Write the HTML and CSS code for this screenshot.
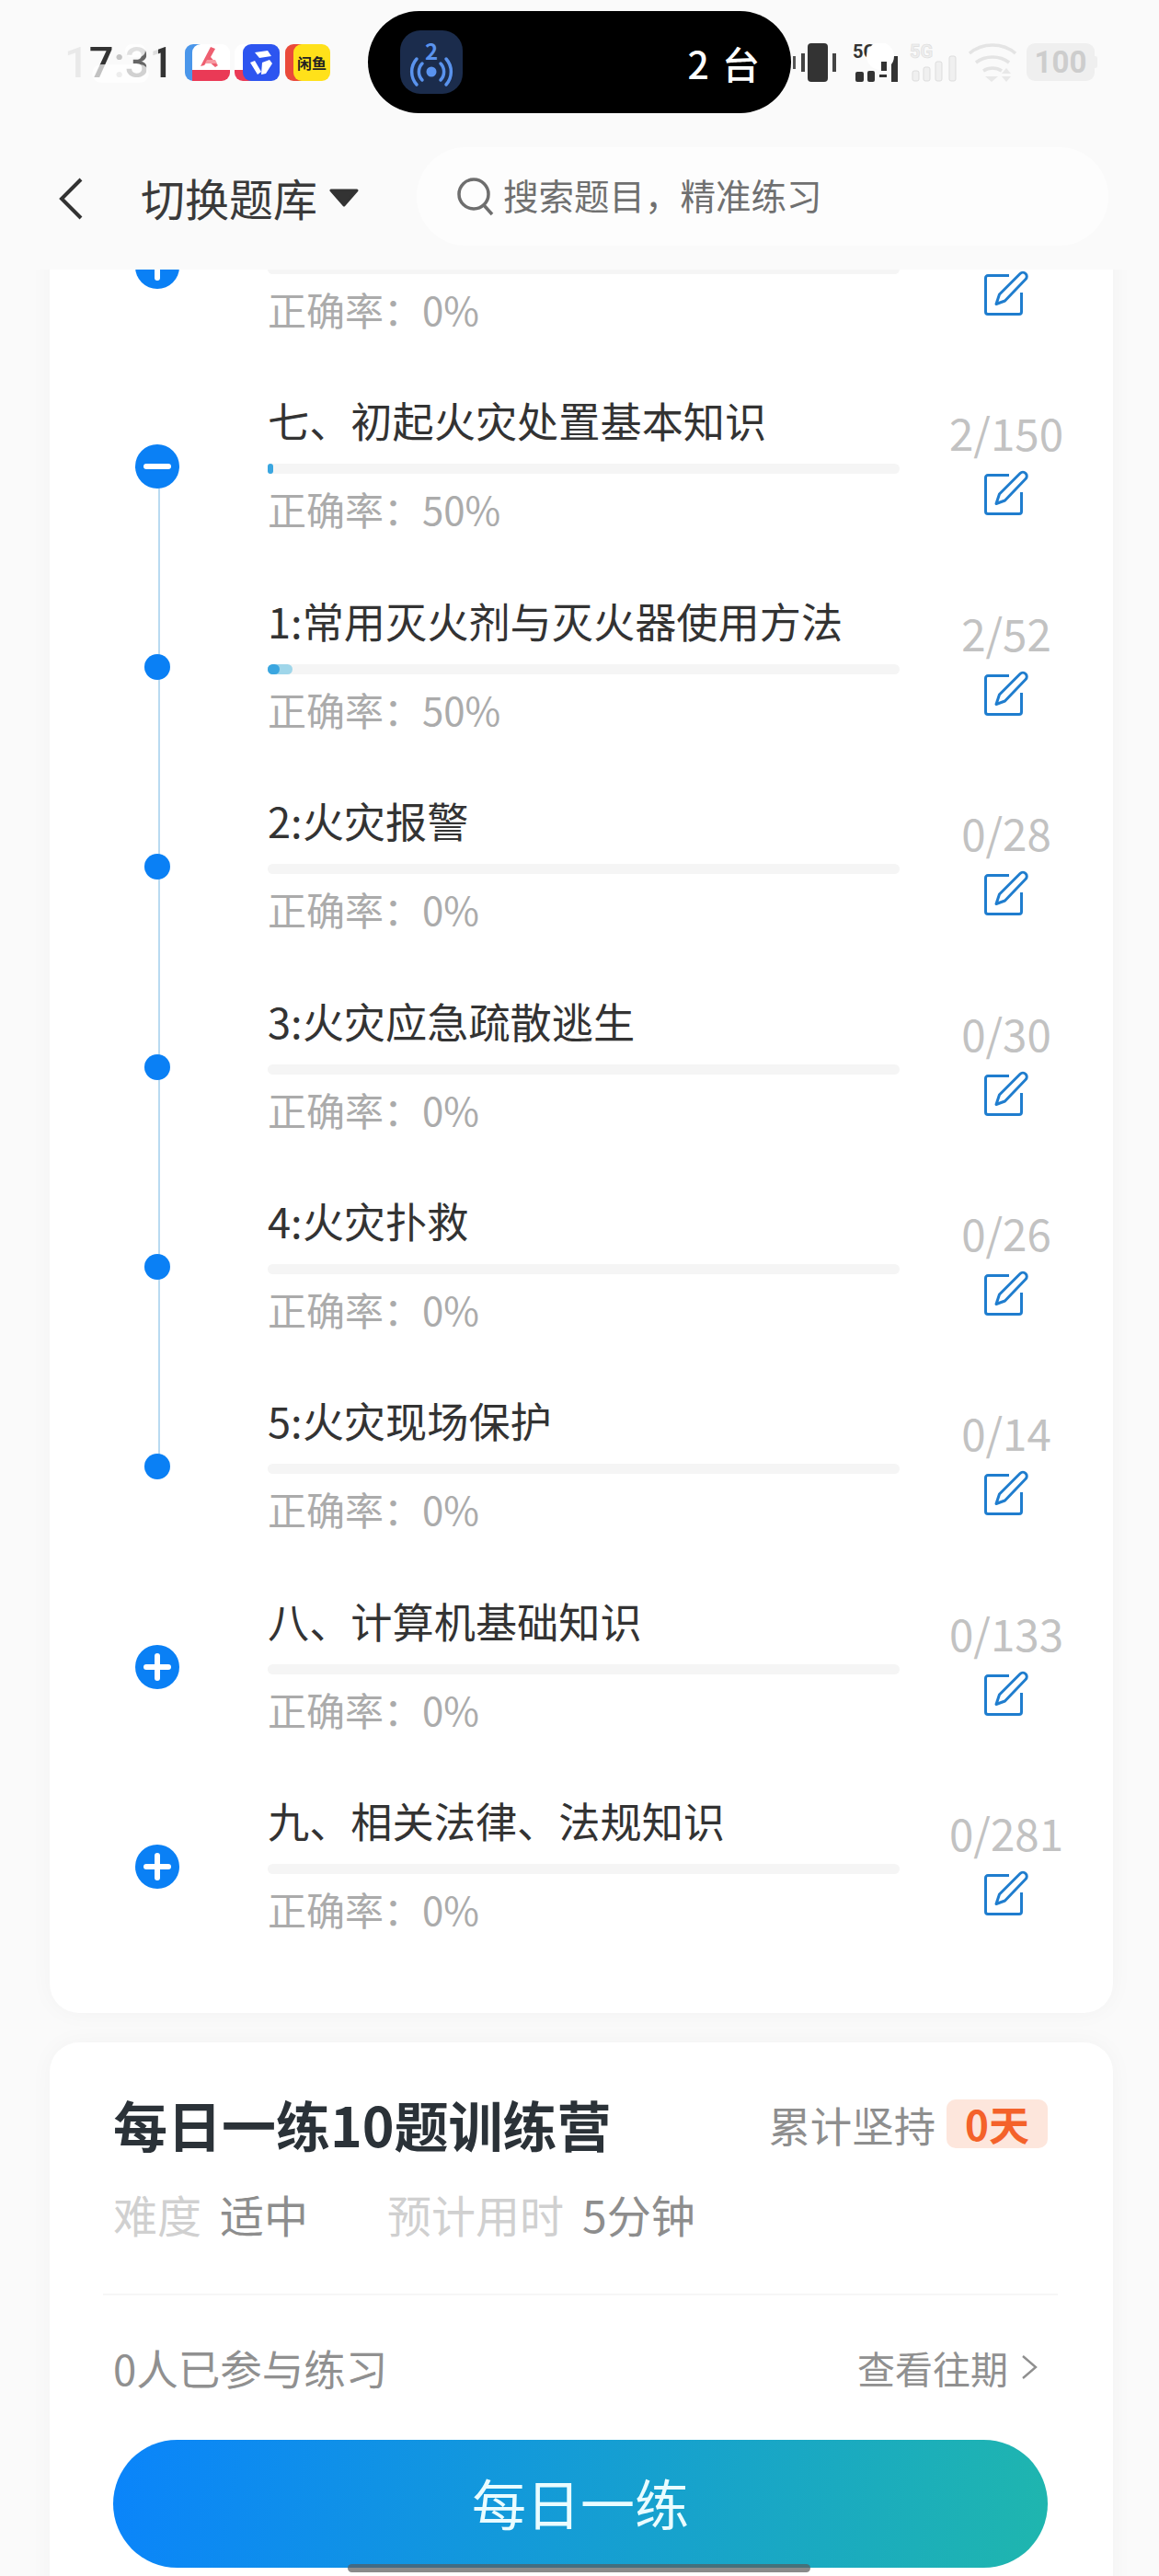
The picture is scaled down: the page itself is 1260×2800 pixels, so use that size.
FILE: index.html
```html
<!DOCTYPE html>
<html>
<head>
    <title>切换题库</title>
    <link rel="stylesheet" href="styles.css">
</head>
<body>

<svg class="defs" width="0" height="0">
    <symbol id="edit" viewBox="0 0 48 49">
        <path d="M27 5.500H4a2.500 2.500 0 0 0-2.500 2.500V45a2.500 2.500 0 0 0 2.500 2.500H38a2.500 2.500 0 0 0 2.500-2.500V24" fill="none" stroke="#1f7dce" stroke-width="3"/>
        <path d="M13 36.500 16.500 26 39 3.500a4.200 4.200 0 0 1 6 6L22.500 33Z" fill="#fff" stroke="#1f7dce" stroke-width="3" stroke-linejoin="round"/>
    </symbol>
</svg>

<div class="page">
    <header class="top">
        <div class="status">
            <div class="time">17:31<span class="blob"></span><span class="blob blob-b"></span></div>
            <div class="apps">
                <div class="app app-a">
                    <svg viewBox="0 0 49 40" width="49" height="40">
                        <rect width="30" height="40" rx="9" fill="#4a96ea"/>
                        <rect x="8" width="41" height="40" rx="9" fill="#fff"/>
                        <path d="M8 28H49V31a9 9 0 0 1-9 9H8Z" fill="#ea3a56"/>
                        <path d="M17 24 28 3l5 2-5 9 8 9-3 2-8-7-4 5Z" fill="#ee5f70"/>
                        <path d="M24 17h9l2 4H22Z" fill="#f79aa3"/>
                    </svg>
                </div>
                <div class="app app-b">
                    <svg viewBox="0 0 49 40" width="49" height="40">
                        <rect width="30" height="40" rx="9" fill="#fff"/>
                        <path d="M0 28H24V40H9a9 9 0 0 1-9-9Z" fill="#ea3a56"/>
                        <rect x="9" width="40" height="40" rx="9" fill="#2d55f0"/>
                        <path d="M22 9 36 7l4 6-13 2ZM17 20l5-2 7 12-4 3ZM30 20l8-3 3 4-7 11-5 1Z" fill="#fff"/>
                    </svg>
                </div>
                <div class="app app-c">
                    <span class="app-c-back"></span>
                    <span class="app-c-front">闲鱼</span>
                </div>
            </div>
            <div class="island">
                <div class="cast">
                    <svg viewBox="0 0 68 69" width="68" height="69">
                        <text x="34" y="32" text-anchor="middle" class="cast-num">2</text>
                        <circle cx="34" cy="45" r="5.500" fill="#5a93ee"/>
                        <path d="M24 36a13 13 0 0 0 0 18M44 36a13 13 0 0 1 0 18M18 31a21 21 0 0 0 0 28M50 31a21 21 0 0 1 0 28" fill="none" stroke="#5a93ee" stroke-width="3.500" stroke-linecap="round"/>
                    </svg>
                </div>
                <div class="cast-text">2 台</div>
            </div>
            <div class="sys">
                <svg viewBox="0 0 56 42" width="56" height="42">
                    <rect x="18" width="22" height="42" rx="4" fill="#333"/>
                    <rect x="11" y="11" width="4" height="20" fill="#444"/>
                    <rect x="2" y="14" width="3" height="14" fill="#555"/>
                    <rect x="45" y="11" width="4" height="20" fill="#444"/>
                </svg>
                <svg class="sig" viewBox="0 0 52 42" width="52" height="42">
                    <text x="0" y="16" class="sig-dark">5G</text>
                    <rect x="3" y="31" width="9" height="11" rx="2" fill="#333"/>
                    <rect x="16" y="30" width="8" height="12" rx="2" fill="#333"/>
                    <rect x="29" y="34" width="8" height="3" fill="#333"/>
                    <rect x="42" y="14" width="7" height="28" fill="#333"/>
                    <circle cx="30" cy="14" r="15" fill="#fff"/>
                    <rect x="31" y="20" width="6" height="10" fill="#333"/>
                </svg>
                <svg class="sig-b" viewBox="0 0 52 42" width="52" height="42">
                    <text x="0" y="16" class="sig-ghost">5G</text>
                    <rect x="3" y="30" width="7" height="11" rx="2" fill="#f0f0f0" stroke="#ddd"/>
                    <rect x="15" y="26" width="7" height="15" rx="2" fill="#f0f0f0" stroke="#ddd"/>
                    <rect x="28" y="20" width="7" height="21" rx="2" fill="#f0f0f0" stroke="#ddd"/>
                    <rect x="43" y="14" width="7" height="27" rx="2" fill="#f0f0f0" stroke="#ddd"/>
                </svg>
                <svg class="wifi" viewBox="0 0 54 42" width="54" height="42">
                    <path d="M2 11C16-1 38-1 52 11M9 21c10-8 26-8 36 0M17 30c6-4 14-4 20 0" fill="none" stroke="#e4e4e4" stroke-width="3.600"/>
                    <path d="M19 36h14l-7 6ZM37 33l5-6 5 6ZM37 36h10l-5 6Z" fill="#e8e8e8"/>
                </svg>
                <div class="battery">100</div>
            </div>
        </div>
        <div class="nav">
            <svg class="back" viewBox="0 0 28 48" width="28" height="48">
                <path d="M25 3 4 24l21 21" fill="none" stroke="#333" stroke-width="4"/>
            </svg>
            <div class="nav-title">切换题库</div>
            <svg class="arrow" viewBox="0 0 32 20" width="32" height="20">
                <path d="M2 2H30L16 18Z" fill="#333" stroke="#333" stroke-width="3" stroke-linejoin="round"/>
            </svg>
            <div class="search">
                <svg viewBox="0 0 40 42" width="40" height="42">
                    <circle cx="18" cy="18" r="16" fill="none" stroke="#6e6e6e" stroke-width="3.500"/>
                    <path d="M29 30 38 40" stroke="#6e6e6e" stroke-width="3.500"/>
                </svg>
                <span>搜索题目，精准练习</span>
            </div>
        </div>
    </header>

    <main>
        <section class="card list">
            <div class="row">
                <div class="rail"><span class="dot big plus"></span></div>
                <div class="info">
                    <div class="name"></div>
                    <div class="bar"></div>
                    <div class="rate">正确率：0%</div>
                </div>
                <div class="side">
                    <div class="count"></div>
                    <svg class="edit"><use href="#edit"/></svg>
                </div>
            </div>

            <div class="row linked">
                <div class="rail"><span class="dot big minus"></span></div>
                <div class="info">
                    <div class="name">七、初起火灾处置基本知识</div>
                    <div class="bar"><span class="fill-dark fill-tiny"></span></div>
                    <div class="rate">正确率：50%</div>
                </div>
                <div class="side">
                    <div class="count">2/150</div>
                    <svg class="edit"><use href="#edit"/></svg>
                </div>
            </div>

            <div class="row linked">
                <div class="rail"><span class="dot"></span></div>
                <div class="info">
                    <div class="name">1:常用灭火剂与灭火器使用方法</div>
                    <div class="bar"><span class="fill-light"></span><span class="fill-dark"></span></div>
                    <div class="rate">正确率：50%</div>
                </div>
                <div class="side">
                    <div class="count">2/52</div>
                    <svg class="edit"><use href="#edit"/></svg>
                </div>
            </div>

            <div class="row linked">
                <div class="rail"><span class="dot"></span></div>
                <div class="info">
                    <div class="name">2:火灾报警</div>
                    <div class="bar"></div>
                    <div class="rate">正确率：0%</div>
                </div>
                <div class="side">
                    <div class="count">0/28</div>
                    <svg class="edit"><use href="#edit"/></svg>
                </div>
            </div>

            <div class="row linked">
                <div class="rail"><span class="dot"></span></div>
                <div class="info">
                    <div class="name">3:火灾应急疏散逃生</div>
                    <div class="bar"></div>
                    <div class="rate">正确率：0%</div>
                </div>
                <div class="side">
                    <div class="count">0/30</div>
                    <svg class="edit"><use href="#edit"/></svg>
                </div>
            </div>

            <div class="row linked">
                <div class="rail"><span class="dot"></span></div>
                <div class="info">
                    <div class="name">4:火灾扑救</div>
                    <div class="bar"></div>
                    <div class="rate">正确率：0%</div>
                </div>
                <div class="side">
                    <div class="count">0/26</div>
                    <svg class="edit"><use href="#edit"/></svg>
                </div>
            </div>

            <div class="row">
                <div class="rail"><span class="dot"></span></div>
                <div class="info">
                    <div class="name">5:火灾现场保护</div>
                    <div class="bar"></div>
                    <div class="rate">正确率：0%</div>
                </div>
                <div class="side">
                    <div class="count">0/14</div>
                    <svg class="edit"><use href="#edit"/></svg>
                </div>
            </div>

            <div class="row">
                <div class="rail"><span class="dot big plus"></span></div>
                <div class="info">
                    <div class="name">八、计算机基础知识</div>
                    <div class="bar"></div>
                    <div class="rate">正确率：0%</div>
                </div>
                <div class="side">
                    <div class="count">0/133</div>
                    <svg class="edit"><use href="#edit"/></svg>
                </div>
            </div>

            <div class="row">
                <div class="rail"><span class="dot big plus"></span></div>
                <div class="info">
                    <div class="name">九、相关法律、法规知识</div>
                    <div class="bar"></div>
                    <div class="rate">正确率：0%</div>
                </div>
                <div class="side">
                    <div class="count">0/281</div>
                    <svg class="edit"><use href="#edit"/></svg>
                </div>
            </div>
        </section>

        <section class="card daily">
            <div class="daily-head">
                <h2>每日一练10题训练营</h2>
                <div class="streak">
                    <span>累计坚持</span>
                    <span class="days">0天</span>
                </div>
            </div>
            <div class="meta">
                <span class="meta-key">难度</span>
                <span class="meta-val">适中</span>
                <span class="meta-key meta-gap">预计用时</span>
                <span class="meta-val">5分钟</span>
            </div>
            <div class="divider"></div>
            <div class="joined">
                <span>0人已参与练习</span>
                <span class="history">查看往期
                    <svg viewBox="0 0 18 28" width="18" height="28">
                        <path d="M2 2 16 14 2 26" fill="none" stroke="#8f8f8f" stroke-width="2.400"/>
                    </svg>
                </span>
            </div>
            <div class="btn">每日一练</div>
        </section>
    </main>

    <div class="home-bar"></div>
</div>

</body>
</html>
```

FILE: styles.css
```css
body {
    margin: 0;
    font-family: "Noto Sans CJK SC", sans-serif;
    background: #fafafa;
}

.defs {
    display: block;
    height: 0;
}

.page {
    position: relative;
    width: 1260px;
    height: 2800px;
    overflow: hidden;
}

/* top bar */
.top {
    position: relative;
    z-index: 5;
    height: 293px;
    background: #fafafa;
}

.status {
    display: flex;
    padding: 12px 0 0 70px;
    height: 111px;
}

.time {
    position: relative;
    width: 131px;
    height: 111px;
    line-height: 111px;
    font-family: Roboto, sans-serif;
    font-size: 47px;
    font-weight: 500;
    background: linear-gradient(90deg, #e9e9e9 0 20%, #333 20% 40%, #c4c4c4 40% 49%, #666 49% 68%, #ddd 68% 78%, #333 78% 90%, #fafafa 90%);
    -webkit-background-clip: text;
    background-clip: text;
    color: transparent;
}

.blob {
    position: absolute;
    left: 30px;
    top: 58px;
    width: 62px;
    height: 20px;
    border-radius: 10px;
    background: #fff;
    opacity: .7;
}

.blob-b {
    left: 66px;
    top: 36px;
    width: 22px;
    height: 14px;
    opacity: .8;
}

.apps {
    display: flex;
    align-items: center;
    width: 199px;
}

.app {
    height: 40px;
}

.app-a {
    width: 49px;
}

.app-b {
    width: 49px;
    margin-left: 5px;
}

.app-c {
    position: relative;
    width: 49px;
    margin-left: 6px;
}

.app-c-back {
    position: absolute;
    left: 0;
    top: 0;
    width: 30px;
    height: 40px;
    border-radius: 9px;
    background: #ea4a3a;
}

.app-c-front {
    position: absolute;
    left: 9px;
    top: 0;
    width: 40px;
    height: 40px;
    border-radius: 9px;
    background: #ffe11a;
    color: #222;
    font-size: 16px;
    font-weight: 700;
    line-height: 40px;
    text-align: center;
}

.island {
    display: flex;
    align-items: center;
    justify-content: space-between;
    width: 460px;
    padding: 0 34px 0 35px;
    box-sizing: border-box;
    background: #000;
    border-radius: 56px;
}

.cast {
    width: 68px;
    height: 69px;
    border-radius: 22px;
    background: #1b2c4c;
}

.cast-num {
    font-size: 24px;
    font-weight: 700;
    fill: #5a93ee;
}

.cast-text {
    color: #fff;
    font-size: 41px;
    font-weight: 500;
    word-spacing: 5px;
}

.sys {
    display: flex;
    align-items: center;
    height: 111px;
}

.sig {
    margin-left: 11px;
}

.sig-b {
    margin-left: 10px;
}

.wifi {
    margin-left: 11px;
}

.sig-dark {
    font-family: Roboto, sans-serif;
    font-size: 20px;
    font-weight: 700;
    fill: #333;
}

.sig-ghost {
    font-family: Roboto, sans-serif;
    font-size: 20px;
    font-weight: 700;
    fill: #eee;
    stroke: #ddd;
    stroke-width: .6px;
}

.battery {
    position: relative;
    width: 74px;
    height: 41px;
    margin-left: 10px;
    border-radius: 9px;
    background: #efefef;
    color: #cdcdcd;
    font-family: Roboto, sans-serif;
    font-size: 33px;
    font-weight: 700;
    line-height: 41px;
    text-align: center;
}

.battery::after {
    content: "";
    position: absolute;
    right: -3px;
    top: 14px;
    width: 3px;
    height: 13px;
    border-radius: 0 2px 2px 0;
    background: #efefef;
}

.nav {
    display: flex;
    align-items: center;
    height: 107px;
    margin-top: 37px;
    padding-left: 63px;
}

.back {
    margin-top: 4px;
}

.nav-title {
    margin-left: 62px;
    color: #3a3a3a;
    font-size: 48px;
    line-height: 60px;
}

.arrow {
    margin: 2px 0 0 13px;
}

.search {
    display: flex;
    align-items: center;
    width: 752px;
    height: 107px;
    margin-left: 63px;
    padding-left: 44px;
    box-sizing: border-box;
    border-radius: 54px;
    background: #fdfdfd;
    color: #707070;
    font-size: 38.500px;
}

.search span {
    margin: -6px 0 0 10px;
}

/* cards */
.card {
    width: 1156px;
    margin-left: 54px;
    background: #fff;
    border-radius: 32px;
    box-shadow: 0 0 26px rgba(0, 0, 0, .035);
}

.list {
    margin-top: -81px;
    padding-bottom: 19px;
}

.row {
    display: flex;
    height: 217.400px;
}

.rail {
    position: relative;
    width: 237px;
    flex: none;
}

.linked .rail::after {
    content: "";
    position: absolute;
    left: 118px;
    top: 78px;
    width: 2px;
    height: 217.400px;
    background: #b9daf1;
}

.dot {
    position: absolute;
    z-index: 1;
    left: 103px;
    top: 64px;
    width: 28px;
    height: 28px;
    border-radius: 50%;
    background: #0a80f5;
}

.dot.big {
    left: 93px;
    top: 54px;
    width: 48px;
    height: 48px;
}

.minus::before,
.plus::before,
.plus::after {
    content: "";
    position: absolute;
    left: 9px;
    top: 21px;
    width: 30px;
    height: 6px;
    border-radius: 3px;
    background: #fff;
}

.plus::after {
    left: 21px;
    top: 9px;
    width: 6px;
    height: 30px;
}

.info {
    width: 687px;
    flex: none;
}

.name {
    height: 60px;
    margin-top: -2px;
    color: #333;
    font-size: 45.200px;
    line-height: 60px;
    white-space: nowrap;
}

.bar {
    position: relative;
    height: 11px;
    margin-top: 17px;
    border-radius: 6px;
    background: #f5f5f5;
}

.fill-light,
.fill-dark {
    position: absolute;
    left: 0;
    top: 0;
    height: 11px;
    border-radius: 6px;
}

.fill-light {
    width: 27px;
    background: #9fd6ea;
}

.fill-dark {
    width: 13px;
    background: #3aa6e0;
}

.fill-tiny {
    width: 6px;
}

.rate {
    height: 60px;
    margin-top: 8px;
    color: #ababab;
    font-size: 42px;
    line-height: 60px;
}

.side {
    display: flex;
    flex-direction: column;
    align-items: center;
    width: 232px;
    flex: none;
    padding-top: 11px;
}

.count {
    height: 60px;
    color: #c2c2c2;
    font-size: 47.500px;
    line-height: 60px;
}

.edit {
    width: 48px;
    height: 49px;
    margin-top: 11px;
}

.daily {
    margin-top: 32px;
    padding: 59px 71px 60px 69px;
    box-sizing: border-box;
}

.daily-head {
    display: flex;
    align-items: center;
    justify-content: space-between;
    height: 60px;
}

h2 {
    margin: 0;
    color: #2b3238;
    font-size: 59px;
    font-weight: 700;
    line-height: 60px;
}

.streak {
    display: flex;
    align-items: center;
    color: #8e8e8e;
    font-size: 45.400px;
}

.days {
    height: 53px;
    margin-left: 12px;
    padding: 0 20px;
    border-radius: 10px;
    background: #fde6dc;
    color: #f4622a;
    font-size: 44px;
    font-weight: 700;
    line-height: 53px;
}

.meta {
    display: flex;
    height: 60px;
    margin-top: 37px;
    font-size: 48px;
    line-height: 60px;
}

.meta-key {
    color: #d0d0d0;
}

.meta-val {
    margin-left: 20px;
    color: #8d8d8d;
}

.meta-gap {
    margin-left: 86px;
}

.divider {
    height: 2px;
    margin: 57px -11px 0 -11px;
    background: #f6f6f6;
}

.joined {
    display: flex;
    align-items: center;
    justify-content: space-between;
    height: 60px;
    margin-top: 48px;
    color: #909090;
    font-size: 45.500px;
}

.history {
    display: flex;
    align-items: center;
    font-size: 41px;
    padding-right: 11px;
    gap: 14px;
}

.btn {
    height: 139px;
    margin-top: 49px;
    border-radius: 70px;
    background: linear-gradient(100deg, #0a84fb, #1fb6ae);
    color: #eafcff;
    font-size: 59px;
    line-height: 136px;
    text-align: center;
}

.home-bar {
    position: absolute;
    z-index: 6;
    left: 378px;
    bottom: 4px;
    width: 503px;
    height: 9px;
    border-radius: 5px;
    background: rgba(90, 90, 90, .7);
}
```
